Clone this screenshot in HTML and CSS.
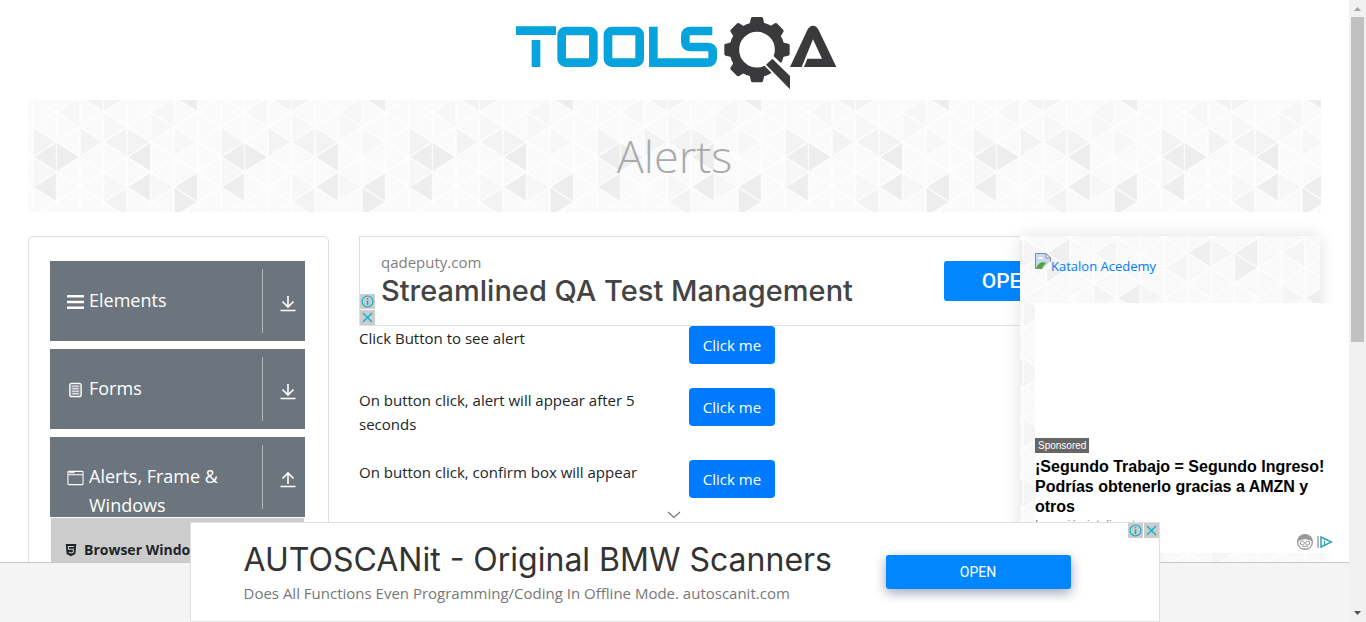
FILE: index.html
```html
<!DOCTYPE html>
<html lang="en">
<head>
<meta charset="utf-8">
<title>ToolsQA - Alerts</title>
<link rel="stylesheet" href="styles.css">
</head>
<body>
<svg class="defs" width="0" height="0" aria-hidden="true">
  <defs>
    <path id="mesh" d="M0 0V120M23.5 0V120M47 0V120M70.500 0V120M94 0V120M117.500 0V120M141 0V120M164.500 0V120M188 0V120M0-120L188 0M0-90L188 30M0-60L188 60M0-30L188 90M0 0L188 120M0 30L188 150M0 60L188 180M0 90L188 210M0 0L188-120M0 30L188-90M0 60L188-60M0 90L188-30M0 120L188 0M0 150L188 30M0 180L188 60M0 210L188 90" fill="none" stroke="#fff" stroke-width="1.500" stroke-opacity=".75"/>
    <pattern id="tri" width="188" height="120" patternUnits="userSpaceOnUse" patternTransform="translate(5 -3)">
      <rect width="188" height="120" fill="#fafafa"/>
      <path fill="#f7f7f7" d="M70.500 15V45L94 30ZM117.500 15V45L141 30ZM141 30V60L164.500 45ZM0 60V90L23.500 75ZM70.500 75V105L94 90ZM47 0V30L23.500 15ZM141 0V30L117.500 15ZM117.500 75V105L141 90Z"/>
      <path fill="#f3f3f3" d="M0 30V60L23.500 45ZM47 30V60L70.500 45ZM94 30V60L70.500 45ZM94 30V60L117.500 45ZM94 90V120L70.500 105ZM47 0L70.500-15V15ZM94 0L70.500-15V15Z"/>
      <path fill="#ededed" d="M23.500 45V75L0 60ZM23.500 45V75L47 60ZM23.500 75V105L0 90ZM117.500 45V75L94 60ZM117.500 75V105L94 90ZM164.500 75V105L141 90ZM141 90V120L164.500 105ZM141 0L164.500-15V15Z"/>
      <use href="#mesh"/>
    </pattern>
    <pattern id="tri-card" width="188" height="120" patternUnits="userSpaceOnUse" patternTransform="translate(3 2)">
      <rect width="188" height="120" fill="#f9f9f9"/>
      <path fill="#f5f5f5" d="M94 0V30L70.500 15ZM164.500 15V45L141 30ZM70.500 45V75L94 60ZM117.500 45V75L141 60ZM0 60V90L23.500 75ZM0 0V30L23.500 15ZM141 60V90L117.500 75Z"/>
      <path fill="#efefef" d="M47 0V30L23.500 15ZM23.500 15V45L47 30ZM188 0V30L164.500 15ZM117.500 45V75L94 60Z"/>
      <use href="#mesh"/>
    </pattern>
    <symbol id="down" viewBox="0 0 16 17"><path d="M8 1V12M2.500 6.500L8 12L13.500 6.500M.5 15.500H15.500" fill="none" stroke="#fff" stroke-width="1.600"/></symbol>
    <symbol id="up" viewBox="0 0 16 17"><path d="M8 13V2M2.500 7.500L8 2L13.500 7.500M.5 15.500H15.500" fill="none" stroke="#fff" stroke-width="1.600"/></symbol>
    <symbol id="info" viewBox="0 0 15 15"><circle cx="7.500" cy="7.500" r="5.500" fill="none" stroke="#00aecd" stroke-width="1.100"/><path d="M7.500 6.500V11M7.500 4V5.300" stroke="#00aecd" stroke-width="1.500"/></symbol>
    <symbol id="close" viewBox="0 0 15 15"><path d="M3 3L12 12M12 3L3 12" stroke="#00aecd" stroke-width="1.300"/></symbol>
  </defs>
</svg>
<div class="screen">
  <div class="viewport">
    <div class="page">
      <header class="top">
        <a href="#" aria-label="Tools QA">
          <svg class="logo" viewBox="0 0 1050 300">
            <g fill="none" stroke="#06a3dd" stroke-width="26">
              <path d="M48 92H168M108 120V201"/>
              <rect x="185" y="93" width="95" height="95" rx="12"/>
              <rect x="324" y="93" width="95" height="95" rx="12"/>
              <path d="M460 80V188H622Q638 188 638 174V154Q638 141 622 141H572Q556 141 556 126V108Q556 93 572 93H637"/>
            </g>
            <g fill="#3a3a3c">
              <circle cx="771" cy="149" r="68" fill="none" stroke="#3a3a3c" stroke-width="29"/>
              <g>
                <path id="tooth" d="M748 76L753 55Q754 51 758 51H784Q788 51 789 55L794 76Z"/>
                <use href="#tooth" transform="rotate(45 771 149)"/><use href="#tooth" transform="rotate(90 771 149)"/>
                <use href="#tooth" transform="rotate(180 771 149)"/>
                <use href="#tooth" transform="rotate(225 771 149)"/><use href="#tooth" transform="rotate(270 771 149)"/>
                <use href="#tooth" transform="rotate(315 771 149)"/>
              </g>
              <path d="M786 190L818 166L850 196L876 230V280L812 216Z" fill="#fff"/>
              <path d="M798 194L817 176L870 228V268Z"/>
              <path d="M870 201L921 92Q928 77 939 77Q950 77 957 92L1009 201H912L922 176H966L939 118L905 201Z"/>
            </g>
          </svg>
        </a>
      </header>
      <section class="banner">
        <svg class="texture" aria-hidden="true"><rect width="100%" height="100%" fill="url(#tri)"/></svg>
        <h1>Alerts</h1>
      </section>
      <div class="columns">
        <nav class="side">
          <button class="group"><svg class="gicon" viewBox="0 0 18 18"><path d="M0 3H18M0 9H18M0 15H18" stroke="#fff" stroke-width="2.600"/></svg><span class="name">Elements</span><span class="toggle"><svg><use href="#down"/></svg></span></button>
          <button class="group"><svg class="gicon" viewBox="0 0 18 18"><rect x="3" y="2" width="12" height="14" rx="2" fill="#89909a" stroke="#fff" stroke-width="1.400"/><path d="M5.500 5H12.500M5.500 7.700H12.500M5.500 10.300H12.500M5.500 13H12.500" stroke="#fff"/></svg><span class="name">Forms</span><span class="toggle"><svg><use href="#down"/></svg></span></button>
          <button class="group"><svg class="gicon" viewBox="0 0 18 18"><rect x="1" y="2" width="16" height="14" rx="1" fill="none" stroke="#fff" stroke-width="1.100"/><path d="M1 5.500H17M2 3.500H8" stroke="#fff" stroke-width="1.100"/></svg><span class="name">Alerts, Frame &amp; Windows</span><span class="toggle"><svg><use href="#up"/></svg></span></button>
          <ul class="sub"><li><a href="#"><svg class="html5" viewBox="0 0 14 16"><path d="M1 1H13L12 12.500L7 15L2 12.500Z" fill="#212529"/><path d="M10.500 4H4L4.300 7.200H9.800L9.400 10.700L7 11.500L4.600 10.700" fill="none" stroke="#ccc" stroke-width="1.200"/></svg>Browser Windows</a></li></ul>
        </nav>
        <main class="main">
          <div class="ad-top">
            <div class="ad-copy"><p class="ad-host">qadeputy.com</p><p class="ad-title">Streamlined QA Test Management</p></div>
            <button class="ad-open">OPEN</button>
            <div class="choices vertical"><svg><use href="#info"/></svg><svg><use href="#close"/></svg></div>
          </div>
          <div class="row"><span id="l1">Click Button to see alert</span><div><button class="btn" aria-describedby="l1">Click me</button></div></div>
          <div class="row"><span id="l2">On button click, alert will appear after 5 seconds</span><div><button class="btn" aria-describedby="l2">Click me</button></div></div>
          <div class="row"><span id="l3">On button click, confirm box will appear</span><div><button class="btn" aria-describedby="l3">Click me</button></div></div>
        </main>
        <aside class="promo">
          <svg class="texture" aria-hidden="true"><rect width="100%" height="100%" fill="url(#tri-card)"/></svg>
          <a class="katalon" href="#"><svg viewBox="0 0 16 16"><path d="M.5 .5H11L15.500 5V15.500H.5Z" fill="#c6d8f5" stroke="#8c8c8c"/><path d="M11 .5V5H15.500Z" fill="#fff" stroke="#8c8c8c"/><path d="M3 6Q3 4 5 4Q8 3 8 6Z" fill="#fff"/><path d="M1 15Q5 7 11 10L7 15Z" fill="#4ca832"/><path d="M7 16L16 8V16Z" fill="#fff"/></svg><span>Katalon Acedemy</span></a>
          <div class="native">
            <span class="tag">Sponsored</span>
            <p class="native-title">¡Segundo Trabajo = Segundo Ingreso! Podrías obtenerlo gracias a AMZN y otros</p>
            <p class="native-sub">Inversión inteligente</p>
            <div class="native-marks">
              <svg width="18" height="18" viewBox="0 0 18 18"><circle cx="9" cy="9" r="8" fill="#999"/><path d="M2.500 8Q9 4.500 15.500 8V11Q14 15.500 9 15.500Q4 15.500 2.500 11Z" fill="#fff"/><circle cx="6.300" cy="10" r="2" fill="none" stroke="#999"/><circle cx="11.700" cy="10" r="2" fill="none" stroke="#999"/><path d="M6 13.300H12" stroke="#999"/></svg>
              <svg width="16" height="14" viewBox="0 0 16 14"><path d="M1 1V13" stroke="#777"/><path d="M4 2V12L14.500 7Z" fill="#fff" stroke="#28a5bd" stroke-width="1.500"/><path d="M7.500 6V10M7.500 4V5" stroke="#28a5bd" stroke-width="1.200"/></svg>
            </div>
          </div>
        </aside>
      </div>
    </div>
    <div class="anchor">
      <button class="collapse" aria-label="Collapse ad"><svg viewBox="0 0 14 8"><path d="M1 1L7 6.500L13 1" fill="none" stroke="#777" stroke-width="1.200"/></svg></button>
      <div class="anchor-ad">
        <div class="ad-copy"><p class="anchor-title">AUTOSCANit - Original BMW Scanners</p><p class="anchor-sub">Does All Functions Even Programming/Coding In Offline Mode. autoscanit.com</p></div>
        <button class="anchor-open">OPEN</button>
        <div class="choices"><svg><use href="#info"/></svg><svg><use href="#close"/></svg></div>
      </div>
    </div>
  </div>
  <div class="scrollbar" aria-hidden="true">
    <svg viewBox="0 0 17 17"><path d="M5 11L8.500 7L12 11Z" fill="#a3a3a3"/></svg>
    <div class="track"><div class="thumb"></div></div>
    <svg viewBox="0 0 17 17"><path d="M5 6H12L8.500 10Z" fill="#505050"/></svg>
  </div>
</div>
</body>
</html>
```
FILE: styles.css
```css
* { box-sizing: border-box; }
body { margin: 0; background: #fff; color: #212529; font: 15px/24px "Open Sans", "Noto Sans", sans-serif; }
p, h1, ul { margin: 0; padding: 0; }
ul { list-style: none; }
button { font-family: inherit; border: 0; padding: 0; cursor: pointer; }
svg { display: block; }
.defs { position: absolute; }
.screen { display: flex; height: 100vh; overflow: hidden; }
.viewport { position: relative; flex: 1; min-width: 0; display: flex; flex-direction: column; }
.page { flex: 1; min-height: 0; overflow: hidden; padding: 0 28px; }
.top { display: flex; justify-content: center; }
.logo { width: 350px; height: 100px; }
.texture { position: absolute; inset: 0; width: 100%; height: 100%; z-index: -1; }
.banner { position: relative; z-index: 0; height: 112px; display: flex; align-items: center; justify-content: center; }
.banner h1 { color: #aaa; font-size: 45px; line-height: 56px; font-weight: 300; }
.columns { display: grid; grid-template-columns: 301px minmax(0, 1fr) 301px; margin-top: 24px; align-items: start; }

.side { border: 1px solid #dfdfdf; border-radius: 5px; padding: 24px 23px 24px 21px; min-height: 400px; }
.group { display: flex; width: 100%; height: 80px; margin-bottom: 8px; padding: 8px 0 8px 17px; background: #6c757d; color: #fff; text-align: left; }
.gicon { width: 17px; height: 18px; margin-top: 24px; }
.name { flex: 1; padding: 17px 0 0 5px; font-size: 18px; line-height: 29px; height: 72px; }
.toggle { display: flex; align-items: center; justify-content: center; width: 43px; height: 64px; padding: 4px 0 0 7px; border-left: 1px solid #b3b5b7; }
.toggle svg { width: 16px; height: 17px; }
.sub { margin: -7px 1px 0; background: #ccc; padding: 20px 13px; }
.sub a { display: flex; align-items: center; gap: 6px; color: #212529; text-decoration: none; font-size: 14px; font-weight: 700; white-space: nowrap; }
.html5 { width: 14px; height: 14px; flex: none; }

.main { margin-left: 30px; }
.ad-top { position: relative; width: 728px; height: 90px; display: flex; justify-content: space-between; border: 1px solid #e0e0e0; padding: 13px 12px 0 21px; background: #fff; }
.ad-copy { white-space: nowrap; }
.ad-host { font: 15px/24px "Open Sans", sans-serif; color: #808080; }
.ad-title { font: 500 29px/34px Inter, Roboto, sans-serif; color: #444; }
.ad-open { width: 130px; height: 40px; margin-top: 11px; border-radius: 3px; background: #0087ff; color: #fff; font: 500 21px/40px Roboto, sans-serif; }
.choices { position: absolute; top: 0; right: 0; display: flex; gap: 1px; }
.choices svg { width: 15px; height: 15px; background: #ccc; }
.choices.vertical { flex-direction: column; top: auto; right: auto; left: 0; bottom: 0; }
.row { display: grid; grid-template-columns: 300px 1fr; gap: 30px; margin-bottom: 24px; }
.btn { width: 86px; height: 38px; background: #007bff; color: #fff; border-radius: 4px; font-size: 15px; }

.promo { position: relative; z-index: 1; margin-right: 1px; padding: 17px 15px 9px; box-shadow: 0 0 16px rgba(0, 0, 0, .12); }
.katalon { display: flex; height: 50px; color: #007bff; font-size: 13px; line-height: 27px; text-decoration: none; }
.katalon svg { width: 16px; height: 16px; }
.native { display: flex; flex-direction: column; align-items: flex-start; width: 300px; height: 250px; padding-top: 135px; background: #fff; color: #000; font-family: "Liberation Sans", Arial, sans-serif; }
.tag { background: #666; color: #fff; font-size: 10px; line-height: 15px; padding: 0 3px; margin-bottom: 4px; }
.native-title { font-size: 16px; line-height: 20px; font-weight: 700; }
.native-sub { font-size: 12px; line-height: 16px; color: #888; }
.native-marks { display: flex; align-items: center; gap: 3px; align-self: flex-end; padding-right: 2px; }

.anchor { position: relative; z-index: 2; flex: none; height: 60px; background: #f4f4f4; border-top: 1px solid #c8c8c8; }
.anchor-ad { position: absolute; bottom: 0; left: 50%; width: 970px; height: 100px; margin-left: -485px; display: flex; justify-content: space-between; padding: 17px 88px 0 53px; border: 1px solid #e0e0e0; background: #fff; }
.collapse { position: absolute; left: 50%; bottom: 99px; width: 24px; height: 16px; margin-left: -13px; background: none; }
.collapse svg { width: 14px; height: 8px; margin: 0 auto; }
.anchor-title { font: 32px/40px Inter, Lato, sans-serif; color: #333; }
.anchor-sub { font: 15px/26px "Open Sans", sans-serif; color: #777; }
.anchor-open { width: 185px; height: 34px; margin-top: 15px; border-radius: 3px; background: #0087ff; color: #fff; font: 400 14px/34px Roboto, sans-serif; box-shadow: 0 4px 12px rgba(20, 30, 70, .4); }

.scrollbar { flex: none; width: 17px; display: flex; flex-direction: column; background: #f1f1f1; }
.scrollbar svg { width: 17px; height: 17px; }
.track { flex: 1; padding: 0 2px; }
.thumb { height: 55.3%; background: #c1c1c1; }
```
